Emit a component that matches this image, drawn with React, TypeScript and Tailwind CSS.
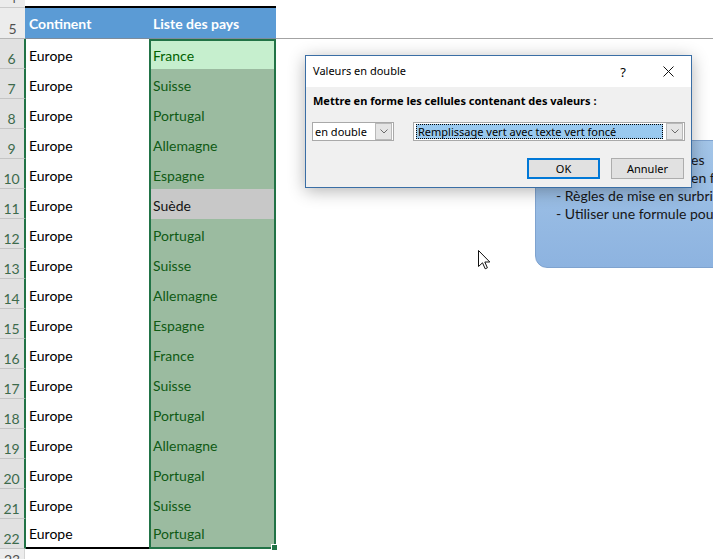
import React from "react";

type Kind = "active" | "dup" | "uniq";

const ROWS: [string, Kind][] = [
  ["France", "active"],
  ["Suisse", "dup"],
  ["Portugal", "dup"],
  ["Allemagne", "dup"],
  ["Espagne", "dup"],
  ["Suède", "uniq"],
  ["Portugal", "dup"],
  ["Suisse", "dup"],
  ["Allemagne", "dup"],
  ["Espagne", "dup"],
  ["France", "dup"],
  ["Suisse", "dup"],
  ["Portugal", "dup"],
  ["Allemagne", "dup"],
  ["Portugal", "dup"],
  ["Suisse", "dup"],
  ["Portugal", "dup"],
];

function Chevron() {
  return (
    <svg width="8" height="5" viewBox="0 0 8 5" fill="none">
      <path d="M0.5 0.5 L4 4 L7.5 0.5" stroke="#6a6a6a" strokeWidth="1" />
    </svg>
  );
}

function DropBtn() {
  return (
    <div className="w-[17px] h-[17px] mr-[1px] shrink-0 bg-[#e5e5e5] border border-[#b9b9b9] flex items-center justify-center">
      <Chevron />
    </div>
  );
}

export default function App() {
  return (
    <div className="relative w-[713px] h-[559px] overflow-hidden bg-white font-['Lato',sans-serif] text-[14px] text-black">
      <div className="-mt-[12px] flex flex-col">
        {/* row 4 */}
        <div className="flex h-[20px]">
          <div className="w-[25px] shrink-0 bg-[#ececec] border-b border-[#cacaca] flex items-end justify-center leading-[18px] text-[#505050]">
            4
          </div>
          <div className="w-[251px] shrink-0 border-b-2 border-black" />
          <div className="flex-1" />
        </div>
        {/* row 5 */}
        <div className="flex h-[31px]">
          <div className="w-[25px] shrink-0 bg-[#ececec] border-b border-[#b5b5b5] flex items-end justify-center leading-[18px] text-[#505050]">
            5
          </div>
          <div className="w-[124px] shrink-0 bg-[#5b9bd5] border-b border-[#7d8c9c] flex items-end pl-[4px] pb-[5px] leading-[18px] font-bold text-white">
            Continent
          </div>
          <div className="w-[127px] shrink-0 bg-[#5b9bd5] border-b border-[#7d8c9c] flex items-end pl-[4px] pb-[5px] leading-[18px] font-bold text-white">
            Liste des pays
          </div>
          <div className="flex-1 border-b border-[#a3a3a3]" />
        </div>
        {/* rows 6-22 */}
        {ROWS.map(([country, kind], i) => {
          const n = i + 6;
          const first = i === 0;
          const last = i === ROWS.length - 1;
          const fill =
            kind === "active"
              ? "bg-[#c6efce] text-[#006100]"
              : kind === "dup"
              ? "bg-[#9bbba0] text-[#0f5a14]"
              : "bg-[#c8c8c8] text-[#141414]";
          return (
            <div key={n} className="flex h-[30px]">
              <div className="w-[26px] shrink-0 bg-[#e1e1e1] border-b border-r-2 border-b-[#c4c4c4] border-r-[#217346] flex items-end justify-center pr-[1px] leading-[18px] text-[#3d6a4c]">
                {n}
              </div>
              <div
                className={`w-[123px] shrink-0 flex items-end pl-[3px] pb-[4px] leading-[18px] ${
                  last ? "border-b-2 border-black" : ""
                }`}
              >
                Europe
              </div>
              <div
                className={`relative w-[127px] shrink-0 flex items-end pl-[2px] pb-[4px] leading-[18px] border-l-2 border-r-2 border-[#217346] ${fill} ${
                  first ? "border-t-2" : ""
                } ${last ? "border-b-2" : ""}`}
              >
                {country}
                {last && (
                  <div className="absolute -right-[4px] -bottom-[4px] w-[7px] h-[7px] bg-[#217346] border border-white" />
                )}
              </div>
              <div className="flex-1" />
            </div>
          );
        })}
        {/* row 23 */}
        <div className="flex h-[20px]">
          <div className="w-[25px] shrink-0 bg-[#ececec] border-b border-r border-b-[#cacaca] border-r-[#d4d4d4] flex items-start justify-center pt-[2px] leading-[18px] text-[#505050]">
            23
          </div>
          <div className="flex-1" />
        </div>
      </div>

      {/* blue text shape */}
      <div className="absolute left-[535px] top-[140px] w-[200px] h-[128px] rounded-bl-[12px] rounded-tl-[12px] border border-[#7fa3cf] bg-gradient-to-b from-[#a3c5e8] to-[#8db3e0] pl-[20px] pt-[10px] leading-[18px] text-[#161616] whitespace-nowrap overflow-hidden">
        <div className="pl-[135px]">es</div>
        <div className="pl-[135px]">en forme</div>
        <div>- Règles de mise en surbrillance</div>
        <div>- Utiliser une formule pour</div>
      </div>

      {/* dialog */}
      <div className="absolute left-[305px] top-[55px] w-[387px] h-[133px] border border-[#3a6ea5] bg-[#f0f0f0] shadow-[0_3px_16px_rgba(0,0,0,0.3)] font-['Noto_Sans',sans-serif] text-[11px] text-black flex flex-col">
        <div className="h-[31px] bg-white flex items-center shrink-0">
          <span className="pl-[7px] flex-1 leading-[16px] -mt-[1px]">Valeurs en double</span>
          <span className="w-[30px] text-center text-[13px] leading-[16px]">?</span>
          <span className="ml-[7px] w-[46px] h-[31px] flex items-center justify-center">
            <svg width="11" height="11" viewBox="0 0 11 11" fill="none">
              <path d="M0.5 0.5 L10.5 10.5 M10.5 0.5 L0.5 10.5" stroke="#111" strokeWidth="1" />
            </svg>
          </span>
        </div>
        <div className="px-[6px] pt-[6px] flex flex-col">
          <div className="pl-[1px] font-bold leading-[16px]">
            Mettre en forme les cellules contenant des valeurs :
          </div>
          <div className="mt-[13px] flex items-center">
            <div className="w-[82px] h-[19px] bg-white border border-[#a9a9a9] flex items-center">
              <span className="flex-1 pl-[2px] leading-[15px]">en double</span>
              <DropBtn />
            </div>
            <div className="ml-[19px] w-[272px] h-[19px] bg-white border border-[#a9a9a9] flex items-center">
              <div className="ml-[2px] flex-1 h-[15px] bg-[#99c9ef] border border-dotted border-black flex items-center pl-[1px] leading-[13px]">
                Remplissage vert avec texte vert foncé
              </div>
              <div className="w-[3px]" />
              <DropBtn />
            </div>
          </div>
          <div className="mt-[17px] flex justify-end gap-[11px] pr-[1px]">
            <div className="w-[73px] h-[21px] bg-[#e1e1e1] border-2 border-[#0078d7] flex items-center justify-center leading-[15px]">
              OK
            </div>
            <div className="w-[73px] h-[21px] bg-[#e1e1e1] border border-[#adadad] flex items-center justify-center leading-[15px]">
              Annuler
            </div>
          </div>
        </div>
      </div>

      {/* mouse cursor */}
      <svg
        className="absolute left-[478px] top-[250px]"
        width="13"
        height="20"
        viewBox="0 0 13 20"
        fill="none"
      >
        <path
          d="M0.5 0.5 L0.5 16.5 L4.5 12.8 L7.2 18.8 L9.4 17.8 L6.8 12 L11.8 12 Z"
          fill="white"
          stroke="#111"
          strokeWidth="1"
          strokeLinejoin="miter"
        />
      </svg>
    </div>
  );
}
